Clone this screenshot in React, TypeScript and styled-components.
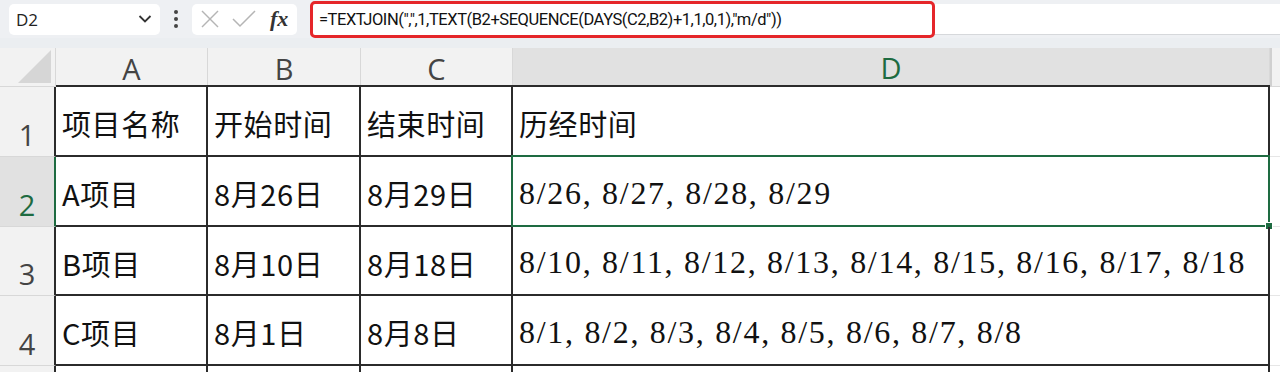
import React from "react";
import styled, { createGlobalStyle } from "styled-components";

const Global = createGlobalStyle`
  html, body { margin: 0; padding: 0; background: #ffffff; }
  body { width: 1280px; height: 372px; overflow: hidden; font-family: "Noto Sans", "Noto Sans CJK SC", sans-serif; }
`;

const Page = styled.div`
  width: 1280px;
  height: 372px;
  overflow: hidden;
  background: #eef0f3;
  display: flex;
  flex-direction: column;
`;

const Toolbar = styled.div`
  height: 38px;
  flex-shrink: 0;
  display: flex;
  align-items: center;
  padding-left: 9px;
  box-sizing: border-box;
  background: #eef0f3;
`;

const NameBox = styled.div`
  width: 151px;
  height: 31px;
  background: #fff;
  border-radius: 5px;
  display: flex;
  align-items: center;
  justify-content: space-between;
  padding: 0 8px 0 7px;
  box-sizing: border-box;
  font-family: "Open Sans", "Noto Sans", sans-serif;
  font-size: 17px;
  color: #222;
`;

const Dots = styled.div`
  width: 32px;
  display: flex;
  flex-direction: column;
  align-items: center;
  gap: 3px;
`;

const Dot = styled.span`
  width: 4px;
  height: 4px;
  border-radius: 50%;
  background: #444;
`;

const FxBox = styled.div`
  width: 105px;
  height: 31px;
  background: #fff;
  border-radius: 5px;
  display: flex;
  align-items: center;
  padding: 0 8px 0 8px;
  box-sizing: border-box;
  gap: 12px;
`;

const FxText = styled.span`
  font-family: "Liberation Serif", serif;
  font-style: italic;
  font-weight: bold;
  font-size: 22px;
  color: #333;
  margin-left: 2px;
`;

const FormulaWrap = styled.div`
  position: relative;
  flex: 1;
  height: 30px;
  margin-left: 13px;
  background: #fff;
  border-bottom: 1px solid #d6d8db;
`;

const Highlight = styled.div`
  position: absolute;
  left: 0;
  top: -3px;
  width: 625px;
  height: 37px;
  border: 3px solid #e5262a;
  border-radius: 5px;
  box-sizing: border-box;
  background: #fff;
  display: flex;
  align-items: center;
  padding-left: 6px;
  font-family: Roboto, "Noto Sans", sans-serif;
  font-size: 16.5px;
  letter-spacing: -0.45px;
  color: #111;
  white-space: nowrap;
`;

const Band = styled.div`
  height: 10px;
  flex-shrink: 0;
  background: #ebeef1;
`;

const Sheet = styled.div`
  flex: 1;
  min-height: 0;
  overflow: hidden;
  display: grid;
  grid-template-columns: 56px 152px 153px 152px 757px 10px;
  grid-template-rows: 39px 70px 70px 69px 70px 40px;
  background: #fff;
`;

const ColHead = styled.div<{ $sel?: boolean }>`
  background: ${(p) => (p.$sel ? "#e1e1e1" : "#f2f2f2")};
  border-right: 1px solid #d8d8d8;
  border-bottom: ${(p) => (p.$sel ? "2px solid #1e6b41" : "1px solid #d8d8d8")};
  box-sizing: border-box;
  display: flex;
  align-items: center;
  justify-content: center;
  font-family: "Open Sans", "Noto Sans", sans-serif;
  font-size: 29px;
  color: ${(p) => (p.$sel ? "#1e6b41" : "#444")};
  padding-top: 2px;
`;

const Corner = styled.div`
  background: #f2f2f2;
  border-right: 1px solid #d8d8d8;
  border-bottom: 1px solid #d8d8d8;
  box-sizing: border-box;
  display: flex;
  align-items: flex-end;
  justify-content: flex-end;
  padding: 0 4px 3px 0;
`;

const EdgeHead = styled.div`
  background: #f2f2f2;
  border-left: 2px solid #d0d0d0;
  border-bottom: 1px solid #d8d8d8;
  box-sizing: border-box;
`;

const RowHead = styled.div<{ $sel?: boolean }>`
  background: ${(p) => (p.$sel ? "#e1e1e1" : "#f2f2f2")};
  border-right: ${(p) => (p.$sel ? "2px solid #1e6b41" : "2px solid #2b2b2b")};
  border-bottom: 1px solid #d8d8d8;
  box-sizing: border-box;
  display: flex;
  align-items: flex-end;
  justify-content: center;
  padding-bottom: 2px;
  font-family: "Open Sans", "Noto Sans", sans-serif;
  font-size: 29px;
  color: ${(p) => (p.$sel ? "#1e6b41" : "#444")};
`;

const Cell = styled.div<{ $serif?: boolean; $first?: boolean }>`
  position: relative;
  border-right: 2px solid #2b2b2b;
  border-bottom: 2px solid #2b2b2b;
  border-top: ${(p) => (p.$first ? "2px solid #2b2b2b" : "none")};
  margin-top: ${(p) => (p.$first ? "-2px" : "0")};
  box-sizing: border-box;
  display: flex;
  align-items: center;
  padding: 4px 0 0 6px;
  white-space: nowrap;
  color: #111;
  font-family: ${(p) =>
    p.$serif
      ? '"Liberation Serif", "Noto Sans CJK SC", serif'
      : '"Noto Sans CJK SC", "Noto Sans", sans-serif'};
  font-size: ${(p) => (p.$serif ? "32px" : "29px")};
  letter-spacing: ${(p) => (p.$serif ? "1.7px" : "0.6px")};
`;

const Selection = styled.div`
  position: absolute;
  left: -2px;
  top: -2px;
  right: -2px;
  bottom: -2px;
  border: 2px solid #1e6b41;
  pointer-events: none;
`;

const Handle = styled.div`
  position: absolute;
  right: -5px;
  bottom: -5px;
  width: 6px;
  height: 6px;
  background: #1e6b41;
  border: 1px solid #fff;
`;

const Edge = styled.div`
  background: #fff;
  border-bottom: 1px solid #e6e6e6;
  box-sizing: border-box;
`;

const Chevron = () => (
  <svg width="14" height="10" viewBox="0 0 14 10">
    <polyline points="1.5,2 7,7.5 12.5,2" fill="none" stroke="#333" strokeWidth="1.8" />
  </svg>
);

const Cross = () => (
  <svg width="20" height="20" viewBox="0 0 20 20">
    <line x1="2" y1="2" x2="18" y2="18" stroke="#b5b5b5" strokeWidth="1.5" />
    <line x1="18" y1="2" x2="2" y2="18" stroke="#b5b5b5" strokeWidth="1.5" />
  </svg>
);

const Check = () => (
  <svg width="24" height="20" viewBox="0 0 24 20">
    <polyline points="1,10 8,17 23,2" fill="none" stroke="#b5b5b5" strokeWidth="1.5" />
  </svg>
);

const Triangle = () => (
  <svg width="33" height="33" viewBox="0 0 33 33">
    <polygon points="0,33 33,33 33,0" fill="#d6d6d6" />
  </svg>
);

const rows = [
  { n: "1", cells: ["项目名称", "开始时间", "结束时间", "历经时间"], serifD: false },
  { n: "2", cells: ["A项目", "8月26日", "8月29日", "8/26, 8/27, 8/28, 8/29"], serifD: true },
  {
    n: "3",
    cells: ["B项目", "8月10日", "8月18日", "8/10, 8/11, 8/12, 8/13, 8/14, 8/15, 8/16, 8/17, 8/18"],
    serifD: true,
  },
  { n: "4", cells: ["C项目", "8月1日", "8月8日", "8/1, 8/2, 8/3, 8/4, 8/5, 8/6, 8/7, 8/8"], serifD: true },
  { n: "", cells: ["", "", "", ""], serifD: true },
];

export default function App() {
  return (
    <>
      <Global />
      <Page>
        <Toolbar>
          <NameBox>
            <span>D2</span>
            <Chevron />
          </NameBox>
          <Dots>
            <Dot />
            <Dot />
            <Dot />
          </Dots>
          <FxBox>
            <Cross />
            <Check />
            <FxText>fx</FxText>
          </FxBox>
          <FormulaWrap>
            <Highlight>=TEXTJOIN(",",1,TEXT(B2+SEQUENCE(DAYS(C2,B2)+1,1,0,1),"m/d"))</Highlight>
          </FormulaWrap>
        </Toolbar>
        <Band />
        <Sheet>
          <Corner>
            <Triangle />
          </Corner>
          <ColHead>A</ColHead>
          <ColHead>B</ColHead>
          <ColHead>C</ColHead>
          <ColHead $sel>D</ColHead>
          <EdgeHead />
          {rows.map((r, ri) => (
            <React.Fragment key={ri}>
              <RowHead $sel={r.n === "2"}>{r.n}</RowHead>
              {r.cells.map((c, ci) => (
                <Cell key={ci} $first={ri === 0} $serif={ci === 3 && r.serifD}>
                  {c}
                  {r.n === "2" && ci === 3 && (
                    <Selection>
                      <Handle />
                    </Selection>
                  )}
                </Cell>
              ))}
              <Edge />
            </React.Fragment>
          ))}
        </Sheet>
      </Page>
    </>
  );
}
